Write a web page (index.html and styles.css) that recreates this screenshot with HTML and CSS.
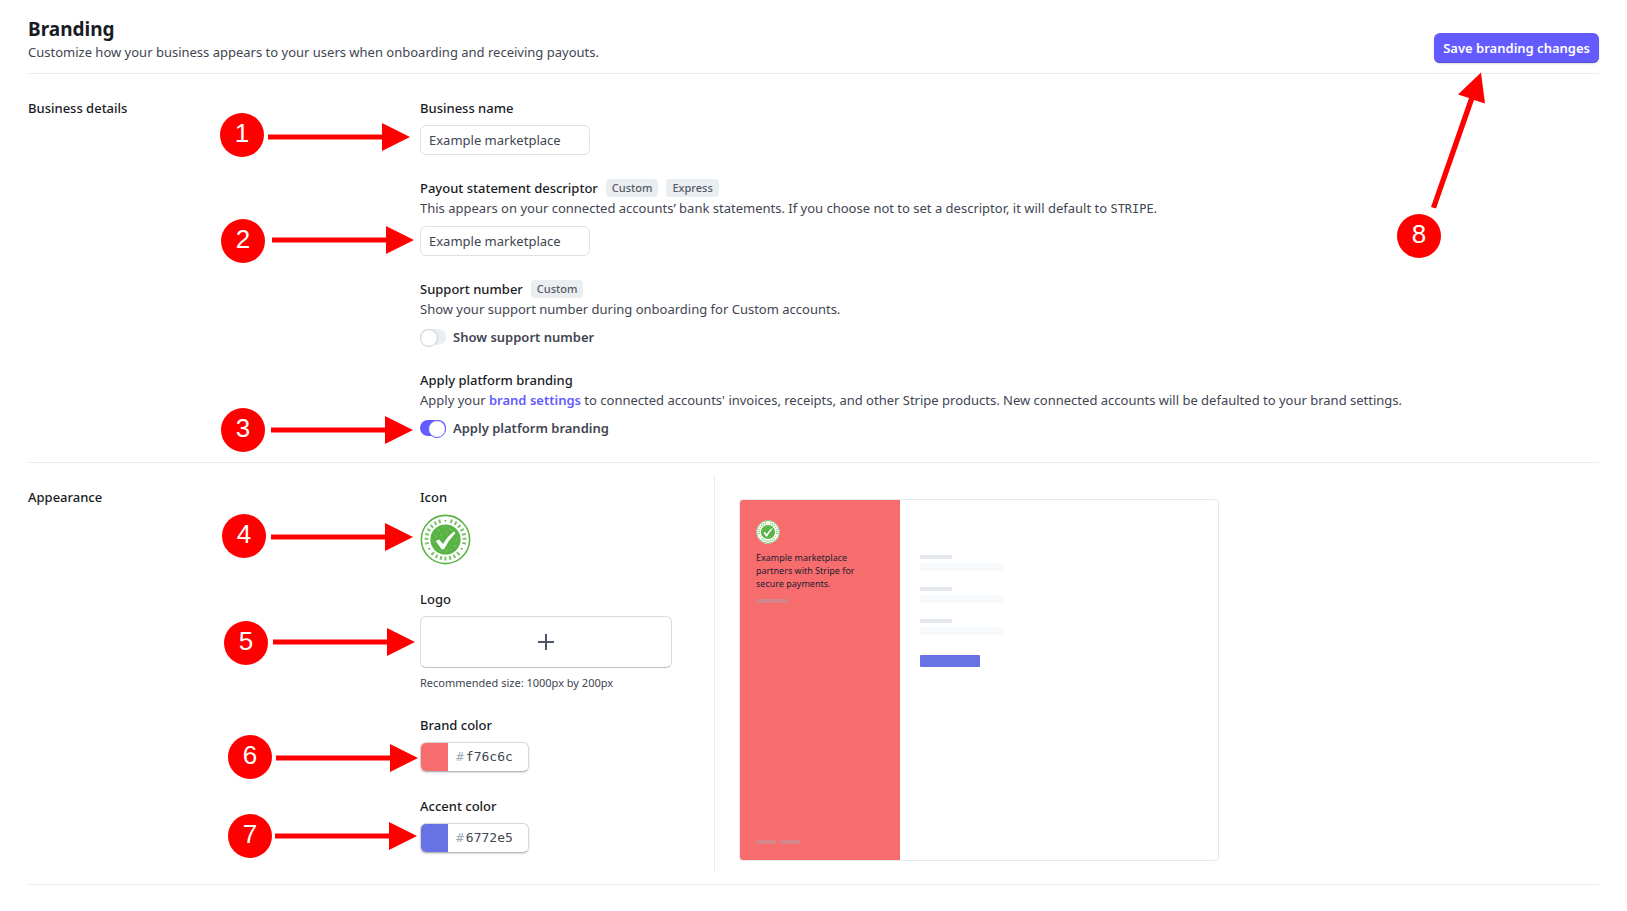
FILE: index.html
```html
<!DOCTYPE html>
<html lang="en">
<head>
<meta charset="utf-8">
<title>Branding</title>
<link rel="stylesheet" href="styles.css">
</head>
<body>
<svg class="defs" aria-hidden="true">
  <symbol id="seal" viewBox="0 0 52 52">
    <circle cx="26" cy="26" r="25.5" fill="#fff"/>
    <circle cx="26" cy="26" r="24.6" fill="none" stroke="#5ab345" stroke-width="1.6"/>
    <circle cx="26" cy="26" r="19.4" fill="none" stroke="#7cc36b" stroke-width="4" pathLength="360" stroke-dasharray="0 15 6 8 6 8 6 8 6 8 6 8 6 8 6 15" transform="rotate(-90 26 26)"/>
    <g fill="#5ab345">
      <circle cx="26" cy="7" r="1"/>
      <circle cx="42.500" cy="35.500" r="1"/>
      <circle cx="9.500" cy="35.500" r="1"/>
      <circle cx="26" cy="26" r="15.4"/>
    </g>
    <g fill="none" stroke="#8fd07f" stroke-width=".7" stroke-linecap="round">
      <path d="M18 16l2 1M23 13l1 1M30 15l3 2M15 22l2 1M21 20l1 2M13 27l1 2M35 33l2-1M31 36l1 1M26 38l2-1M37 27l1-2M27 18l1 1M19 37l2 1"/>
    </g>
    <path d="M16 27.500L19.500 26l4 4.500Q28 22.500 35 17.500L36 19.500Q29 26.500 24.500 36h-2.500Z" fill="#fff"/>
  </symbol>
</svg>

<main class="page">
  <header class="page-header">
    <div class="intro">
      <h1>Branding</h1>
      <p>Customize how your business appears to your users when onboarding and receiving payouts.</p>
    </div>
    <button class="save" type="button">Save branding changes</button>
  </header>

  <section class="section">
    <h2>Business details</h2>
    <div class="fields">
      <div class="field">
        <label class="label" for="business-name">Business name</label>
        <input class="text-input" id="business-name" type="text" value="Example marketplace">
      </div>
      <div class="field">
        <div>
          <div class="label-row">
            <label class="label" for="descriptor">Payout statement descriptor</label>
            <span class="badge">Custom</span>
            <span class="badge">Express</span>
          </div>
          <p>This appears on your connected accounts’ bank statements. If you choose not to set a descriptor, it will default to <code>STRIPE</code>.</p>
        </div>
        <input class="text-input" id="descriptor" type="text" value="Example marketplace">
      </div>
      <div class="field">
        <div>
          <div class="label-row">
            <h3 class="label">Support number</h3>
            <span class="badge">Custom</span>
          </div>
          <p>Show your support number during onboarding for Custom accounts.</p>
        </div>
        <label class="switch-row"><input class="switch" type="checkbox" role="switch">Show support number</label>
      </div>
      <div class="field">
        <div>
          <h3 class="label">Apply platform branding</h3>
          <p>Apply your <a href="#brand">brand settings</a> to connected accounts' invoices, receipts, and other Stripe products. New connected accounts will be defaulted to your brand settings.</p>
        </div>
        <label class="switch-row"><input class="switch" type="checkbox" role="switch" checked>Apply platform branding</label>
      </div>
    </div>
  </section>

  <section class="section appearance">
    <h2>Appearance</h2>
    <div class="split">
      <div class="editor">
        <div class="field">
          <h3 class="label">Icon</h3>
          <button class="icon-button" type="button" aria-label="Change icon"><svg><use href="#seal"/></svg></button>
        </div>
        <div class="field">
          <h3 class="label">Logo</h3>
          <button class="logo-button" type="button" aria-label="Add logo">
            <svg viewBox="0 0 16 16"><path d="M8 0v16M0 8h16"/></svg>
          </button>
          <p class="hint">Recommended size: 1000px by 200px</p>
        </div>
        <div class="field">
          <label class="label" for="brand">Brand color</label>
          <div class="color-field">
            <input type="color" value="#f76c6c" aria-label="Pick brand color">
            <span class="hash">#</span><input id="brand" type="text" value="f76c6c">
          </div>
        </div>
        <div class="field">
          <label class="label" for="accent">Accent color</label>
          <div class="color-field">
            <input type="color" value="#6772e5" aria-label="Pick accent color">
            <span class="hash">#</span><input id="accent" type="text" value="6772e5">
          </div>
        </div>
      </div>

      <div class="preview-pane">
        <div class="preview">
          <div class="preview-side">
            <svg class="preview-icon"><use href="#seal"/></svg>
            <p>Example marketplace partners with Stripe for secure payments.</p>
            <span class="ghost"></span>
            <div class="ghost-footer"><span class="ghost short"></span><span class="ghost short"></span></div>
          </div>
          <div class="preview-form">
            <div class="line"><span class="bar"></span><span class="box"></span></div>
            <div class="line"><span class="bar"></span><span class="box"></span></div>
            <div class="line"><span class="bar"></span><span class="box"></span></div>
            <span class="submit"></span>
          </div>
        </div>
      </div>
    </div>
  </section>

  <svg class="callouts left" viewBox="0 0 440 911">
    <g class="arrows">
      <path d="M268 134.500H382V123L410 137L382 151V139.500H268Z"/>
      <path d="M272 237.500H386V226L414 240L386 254V242.500H272Z"/>
      <path d="M271 427.500H385V416L413 430L385 444V432.500H271Z"/>
      <path d="M271 534.500H385V523L413 537L385 551V539.500H271Z"/>
      <path d="M273 639.500H387V628L415 642L387 656V644.500H273Z"/>
      <path d="M276 755.500H390V744L418 758L390 772V760.500H276Z"/>
      <path d="M275 833.500H389V822L417 836L389 850V838.500H275Z"/>
      <circle cx="242" cy="135" r="22"/>
      <circle cx="243" cy="241" r="22"/>
      <circle cx="243" cy="430" r="22"/>
      <circle cx="244" cy="536" r="22"/>
      <circle cx="246" cy="643" r="22"/>
      <circle cx="250" cy="757" r="22"/>
      <circle cx="250" cy="836" r="22"/>
    </g>
    <text x="242" y="142">1</text>
    <text x="243" y="248">2</text>
    <text x="243" y="437">3</text>
    <text x="244" y="543">4</text>
    <text x="246" y="650">5</text>
    <text x="250" y="764">6</text>
    <text x="250" y="843">7</text>
  </svg>
  <svg class="callouts right" viewBox="0 0 240 280">
    <g class="arrows">
      <path d="M44 207L82 98L71 94.500L94 72.500L98 103.500L87 100L49 208.500Z"/>
      <circle cx="32" cy="236" r="22"/>
    </g>
    <text x="32" y="243">8</text>
  </svg>
</main>
</body>
</html>
```
FILE: styles.css
```css
* {
  box-sizing: border-box;
}

body {
  margin: 0;
  background: #fff;
  color: #414552;
  font-family: "Noto Sans", "Open Sans", sans-serif;
  font-size: 13px;
  line-height: 20px;
}

h1, h2, h3, p {
  margin: 0;
}

input, button {
  margin: 0;
  padding: 0;
  border: 0;
  font: inherit;
  color: inherit;
}

.defs {
  position: absolute;
  width: 0;
  height: 0;
}

.page {
  position: relative;
  padding: 16px 28px 24px;
}

.page-header {
  display: flex;
  justify-content: space-between;
  align-items: flex-end;
  padding-bottom: 10px;
  border-bottom: 1px solid #ebeef1;
}

.intro {
  padding-bottom: 1px;
}

h1 {
  color: #1a1b25;
  font-size: 19px;
  font-weight: 700;
  line-height: 26px;
}

.save {
  height: 30px;
  padding: 0 9px;
  border-radius: 6px;
  background: #635bff;
  box-shadow: 0 1px 2px rgba(0, 0, 0, .15), inset 0 -1px 0 #5851df;
  color: #fff;
  font-weight: 600;
}

.section {
  display: grid;
  grid-template-columns: 392px 1fr;
  padding: 24px 0;
  border-bottom: 1px solid #ebeef1;
}

h2, .label {
  color: #1a1b25;
  font-size: 13px;
  font-weight: 500;
}

.fields, .editor {
  display: flex;
  flex-direction: column;
  gap: 24px;
}

.fields {
  gap: 23px;
}

.field {
  display: flex;
  flex-direction: column;
  align-items: flex-start;
  gap: 7px;
}

.label-row {
  display: flex;
  align-items: center;
  gap: 8px;
}

.badge {
  padding: 0 6px;
  border-radius: 4px;
  background: #ebeef1;
  color: #545969;
  font-size: 11px;
  font-weight: 500;
  line-height: 18px;
}

.text-input {
  width: 170px;
  height: 30px;
  padding: 0 8px;
  border: 1px solid #dfe1e6;
  border-radius: 6px;
  background: #fff;
}

code {
  font-family: "DejaVu Sans Mono", monospace;
  font-size: 12px;
}

a {
  color: #635bff;
  font-weight: 600;
  text-decoration: none;
}

.switch-row {
  display: flex;
  align-items: center;
  gap: 7px;
  padding-top: 1px;
  font-weight: 600;
}

.switch {
  appearance: none;
  display: flex;
  width: 26px;
  height: 16px;
  border-radius: 8px;
  background: #ebeef1;
}

.switch::before {
  content: "";
  width: 16px;
  height: 16px;
  border: 1px solid #c9ccd3;
  border-radius: 50%;
  background: #fff;
}

.switch:checked {
  justify-content: flex-end;
  background: #635bff;
}

.switch:checked::before {
  border-color: #635bff;
}

.appearance {
  padding: 12px 0;
}

.appearance h2, .editor {
  padding-top: 12px;
}

.split {
  display: grid;
  grid-template-columns: 294px 1fr;
}

.editor {
  padding-bottom: 16px;
}

.icon-button {
  background: none;
}

.icon-button svg {
  display: block;
  width: 51px;
  height: 51px;
}

.logo-button {
  display: grid;
  place-items: center;
  width: 252px;
  height: 52px;
  border: 1px solid #d8dadf;
  border-bottom-color: #bdc0c6;
  border-radius: 6px;
  background: #fff;
}

.logo-button svg {
  width: 16px;
  height: 16px;
  stroke: #4f5366;
  stroke-width: 2;
}

.hint {
  font-size: 11px;
  line-height: 16px;
}

.color-field {
  display: flex;
  align-items: center;
  width: 109px;
  height: 30px;
  overflow: hidden;
  border: 1px solid #d5d7dc;
  border-bottom-color: #b4b6bb;
  border-radius: 6px;
  box-shadow: 0 1px 2px rgba(0, 0, 0, .15);
  font-family: "DejaVu Sans Mono", monospace;
}

.color-field input[type="color"] {
  appearance: none;
  width: 27px;
  height: 28px;
}

.color-field input::-webkit-color-swatch-wrapper {
  padding: 0;
}

.color-field input::-webkit-color-swatch {
  border: 0;
  border-radius: 0;
}

.color-field input[type="text"] {
  flex: 1;
  min-width: 0;
}

.hash {
  padding: 0 2px 0 8px;
  color: #a3acba;
}

.preview-pane {
  padding: 24px 24px 11px;
  border-left: 1px solid #ebeef1;
}

.preview {
  display: flex;
  width: 480px;
  height: 362px;
  overflow: hidden;
  border: 1px solid #e3e8ee;
  border-radius: 4px;
}

.preview-side {
  display: flex;
  flex: 0 0 160px;
  flex-direction: column;
  align-items: flex-start;
  padding: 20px 16px 16px;
  background: #f76c6c;
}

.preview-icon {
  width: 24px;
  height: 24px;
}

.preview-side p {
  width: 112px;
  padding: 7px 0 9px;
  color: #1a1f36;
  font-size: 9px;
  line-height: 13px;
}

.ghost {
  width: 32px;
  height: 4px;
  border-radius: 1px;
  background: #d6858d;
}

.ghost.short {
  width: 20px;
}

.ghost-footer {
  display: flex;
  gap: 4px;
  margin-top: auto;
}

.preview-form {
  display: flex;
  flex-direction: column;
  gap: 16px;
  padding: 55px 20px;
}

.line {
  display: flex;
  flex-direction: column;
  gap: 4px;
}

.bar {
  width: 32px;
  height: 4px;
  border-radius: 1px;
  background: #e3e8ee;
}

.box {
  width: 84px;
  height: 8px;
  border-radius: 2px;
  background: #f7fafc;
}

.submit {
  width: 60px;
  height: 12px;
  margin-top: 4px;
  border-radius: 1px;
  background: #6772e5;
}

/* Numbered callouts drawn over the form */
.callouts {
  position: absolute;
  top: 0;
  pointer-events: none;
  font-family: "Liberation Sans", sans-serif;
  font-size: 26px;
  text-anchor: middle;
  fill: #fff;
}

.callouts.left {
  left: 0;
  width: 440px;
  height: 911px;
}

.callouts.right {
  right: 0;
  width: 240px;
  height: 280px;
}

.arrows {
  fill: #f00;
}
```
